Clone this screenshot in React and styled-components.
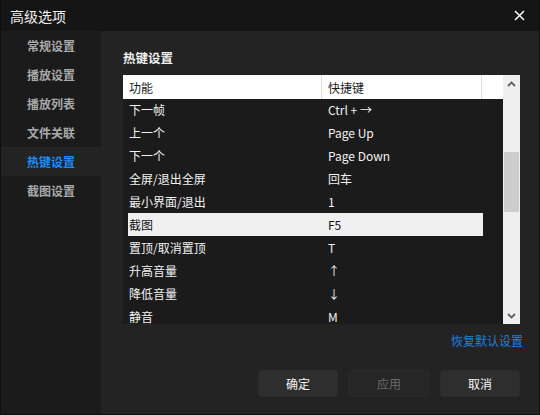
import React from 'react';
import styled, { createGlobalStyle } from 'styled-components';

const FONT = '"Noto Sans CJK SC", "Noto Sans", "Liberation Sans", sans-serif';

const GlobalStyle = createGlobalStyle`
  html, body {
    margin: 0;
    padding: 0;
    background: #141414;
  }
  * {
    box-sizing: border-box;
  }
`;

const NAV = ['常规设置', '播放设置', '播放列表', '文件关联', '热键设置', '截图设置'];

const HOTKEYS = [
  ['下一帧', 'Ctrl + →'],
  ['上一个', 'Page Up'],
  ['下一个', 'Page Down'],
  ['全屏/退出全屏', '回车'],
  ['最小界面/退出', '1'],
  ['截图', 'F5'],
  ['置顶/取消置顶', 'T'],
  ['升高音量', '↑'],
  ['降低音量', '↓'],
  ['静音', 'M'],
];

const Window = styled.div`
  width: 540px;
  height: 415px;
  display: flex;
  flex-direction: column;
  border: 1px solid #0f0f0f;
  border-top: none;
  font-family: ${FONT};
  overflow: hidden;
`;

const TitleBar = styled.div`
  height: 31px;
  flex: none;
  display: flex;
  align-items: center;
  justify-content: space-between;
  padding: 0 13px 0 9px;
  background: #151515;
  color: #f0f0f0;
  font-size: 14px;
`;

const CloseButton = styled.button`
  width: 14px;
  height: 14px;
  padding: 0;
  border: none;
  background: none;
  display: flex;
  align-items: center;
  justify-content: center;
  cursor: pointer;
`;

const Body = styled.div`
  flex: 1;
  display: flex;
  min-height: 0;
`;

const Sidebar = styled.nav`
  width: 100px;
  flex: none;
  background: #1b1b1b;
  display: flex;
  flex-direction: column;
`;

const NavItem = styled.div`
  height: 29px;
  display: flex;
  align-items: center;
  justify-content: center;
  font-size: 12px;
  font-weight: 700;
  color: ${(p) => (p.$active ? '#1e8cf5' : '#a9a9a9')};
  background: ${(p) => (p.$active ? '#232323' : 'transparent')};
`;

const Content = styled.section`
  flex: 1;
  background: #232323;
  padding: 16px 19px 17px 22px;
  display: flex;
  flex-direction: column;
`;

const Heading = styled.h2`
  margin: 0 0 6px;
  height: 22px;
  line-height: 22px;
  font-size: 12.5px;
  font-weight: 700;
  color: #f2f2f2;
`;

const TableBox = styled.div`
  height: 249px;
  display: flex;
  flex: none;
`;

const TableMain = styled.div`
  width: 380px;
  display: flex;
  flex-direction: column;
  background: #1b1b1b;
  overflow: hidden;
`;

const HeaderRow = styled.div`
  height: 24px;
  flex: none;
  display: grid;
  grid-template-columns: 199px 160px 1fr;
  background: #ffffff;
  color: #1a1a1a;
  font-size: 12px;
`;

const HeaderCell = styled.div`
  display: flex;
  align-items: center;
  padding-left: ${(p) => p.$pad}px;
  border-right: ${(p) => (p.$last ? 'none' : '1px solid #dedede')};
`;

const Rows = styled.div`
  padding-left: 5px;
  width: 360px;
  margin-top: -1px;
`;

const Row = styled.div`
  height: 23px;
  display: grid;
  grid-template-columns: 194px 1fr;
  align-items: center;
  font-size: 12px;
  line-height: 15px;
  color: ${(p) => (p.$selected ? '#111111' : '#f2f2f2')};
  background: ${(p) => (p.$selected ? '#f0f0f0' : 'transparent')};
`;

const Cell = styled.div`
  padding-left: ${(p) => p.$pad}px;
  white-space: nowrap;
`;

const Scrollbar = styled.div`
  width: 17px;
  background: #efefef;
  display: flex;
  flex-direction: column;
`;

const ScrollArrow = styled.div`
  height: 17px;
  flex: none;
  display: flex;
  align-items: center;
  justify-content: center;
`;

const Track = styled.div`
  flex: 1;
  padding-top: 60px;
`;

const Thumb = styled.div`
  height: 60px;
  margin: 0 1px;
  background: #cdcdcd;
`;

const RestoreLink = styled.a`
  align-self: flex-end;
  margin: 8px -3px 0 0;
  font-size: 12px;
  line-height: 18px;
  color: #1a80e0;
  cursor: pointer;
`;

const Footer = styled.div`
  margin-top: auto;
  display: flex;
  justify-content: flex-end;
  gap: 11px;
`;

const Button = styled.button`
  width: 80px;
  height: 27px;
  border: 1px solid #2b2b2b;
  border-radius: 3px;
  background: ${(p) => (p.disabled ? '#262626' : '#2e2e2e')};
  color: ${(p) => (p.disabled ? '#6a6a6a' : '#f4f4f4')};
  font-family: ${FONT};
  font-size: 12px;
  padding: 0;
`;

const Chevron = ({ up }) => (
  <svg width="9" height="6" viewBox="0 0 9 6">
    <path
      d={up ? 'M1 5 L4.5 1.5 L8 5' : 'M1 1 L4.5 4.5 L8 1'}
      fill="none"
      stroke="#606060"
      strokeWidth="1.8"
    />
  </svg>
);

const App = () => (
  <>
    <GlobalStyle />
    <Window>
      <TitleBar>
        <span>高级选项</span>
        <CloseButton aria-label="关闭">
          <svg width="11" height="11" viewBox="0 0 11 11">
            <path d="M1 1 L10 10 M10 1 L1 10" stroke="#f4f4f4" strokeWidth="1.6" />
          </svg>
        </CloseButton>
      </TitleBar>
      <Body>
        <Sidebar>
          {NAV.map((item) => (
            <NavItem key={item} $active={item === '热键设置'}>
              {item}
            </NavItem>
          ))}
        </Sidebar>
        <Content>
          <Heading>热键设置</Heading>
          <TableBox>
            <TableMain>
              <HeaderRow>
                <HeaderCell $pad={6}>功能</HeaderCell>
                <HeaderCell $pad={6}>快捷键</HeaderCell>
                <HeaderCell $last />
              </HeaderRow>
              <Rows>
                {HOTKEYS.map(([name, key]) => (
                  <Row key={name} $selected={name === '截图'}>
                    <Cell $pad={1}>{name}</Cell>
                    <Cell $pad={6}>{key}</Cell>
                  </Row>
                ))}
              </Rows>
            </TableMain>
            <Scrollbar>
              <ScrollArrow>
                <Chevron up />
              </ScrollArrow>
              <Track>
                <Thumb />
              </Track>
              <ScrollArrow>
                <Chevron />
              </ScrollArrow>
            </Scrollbar>
          </TableBox>
          <RestoreLink>恢复默认设置</RestoreLink>
          <Footer>
            <Button>确定</Button>
            <Button disabled>应用</Button>
            <Button>取消</Button>
          </Footer>
        </Content>
      </Body>
    </Window>
  </>
);

export default App;
